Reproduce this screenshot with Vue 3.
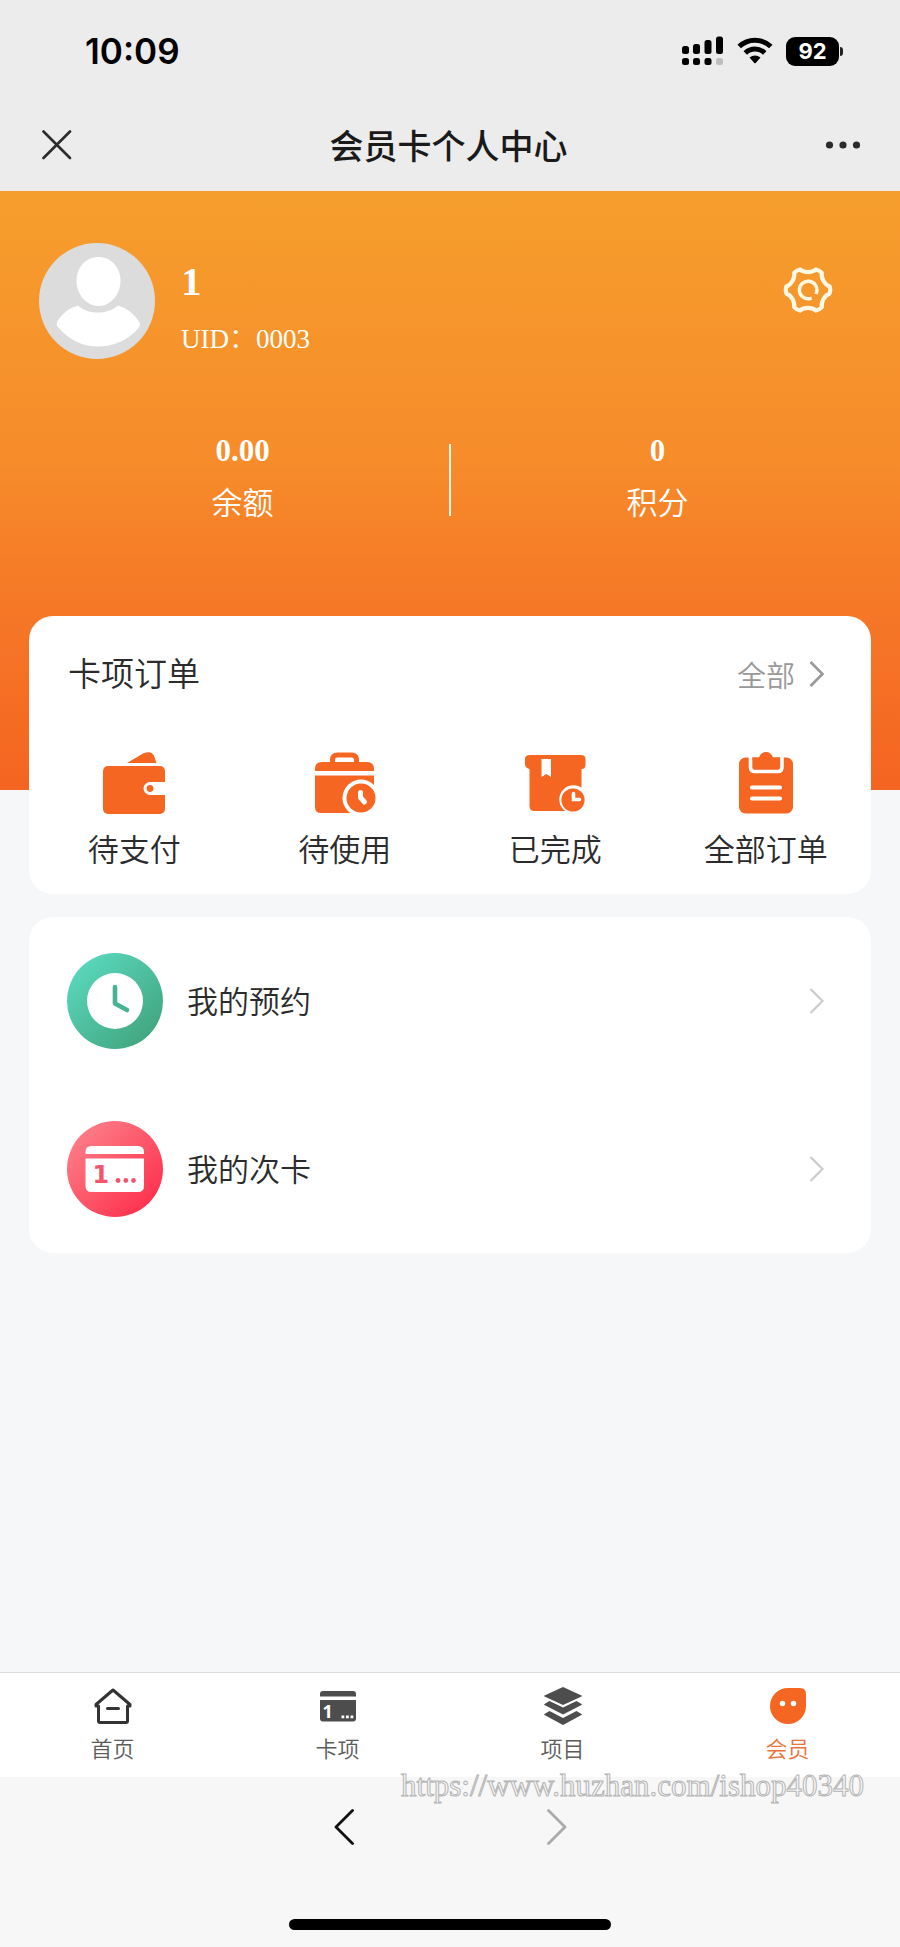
<script setup>
const stats = [
  { value: '0.00', label: '余额' },
  { value: '0', label: '积分' },
]

const orders = [
  { icon: 'wallet', label: '待支付' },
  { icon: 'case', label: '待使用' },
  { icon: 'box', label: '已完成' },
  { icon: 'board', label: '全部订单' },
]

const entries = [
  { icon: 'clock', label: '我的预约' },
  { icon: 'card', label: '我的次卡' },
]

const tabs = [
  { icon: 'home', label: '首页' },
  { icon: 'card', label: '卡项' },
  { icon: 'layers', label: '项目' },
  { icon: 'face', label: '会员', active: true },
]

// Six-toothed gear outline around the origin
const point = (deg, r) => {
  const a = (deg * Math.PI) / 180
  return `${(r * Math.cos(a)).toFixed(2)} ${(r * Math.sin(a)).toFixed(2)}`
}
const gear =
  [0, 60, 120, 180, 240, 300]
    .map(
      (a, i) =>
        `${i ? 'L' : 'M'}${point(a - 9, 22)} Q${point(a, 22.8)} ${point(a + 9, 22)} ` +
        `C${point(a + 17, 17.5)} ${point(a + 43, 17.5)} ${point(a + 51, 22)}`
    )
    .join(' ') + ' Z'
</script>

<template>
  <div class="page">
    <header class="top">
      <div class="status">
        <span class="time">10:09</span>
        <div class="signals">
          <svg width="42" height="30" viewBox="0 0 42 30" aria-hidden="true">
            <rect x="0" y="10" width="7" height="8" rx="2.5" />
            <rect x="11" y="8" width="7" height="10" rx="2.5" />
            <rect x="22.5" y="4" width="7" height="14" rx="2.5" />
            <rect x="34" y="0.5" width="7" height="17.5" rx="2.5" />
            <rect x="0" y="22" width="7" height="7" rx="2.5" />
            <rect x="11" y="22" width="7" height="7" rx="2.5" />
            <rect x="22.5" y="22" width="7" height="7" rx="2.5" />
            <rect x="34" y="22" width="7" height="7" rx="2.5" fill="#bdbdbd" />
          </svg>
          <svg width="36" height="28" viewBox="0 0 36 28" aria-hidden="true">
            <path d="M2.2 9.5 A23 23 0 0 1 33.8 9.5" fill="none" stroke="#000" stroke-width="5" />
            <path d="M8.3 16 A14 14 0 0 1 27.7 16" fill="none" stroke="#000" stroke-width="5" />
            <path d="M12.5 20.5 Q18 16.5 23.5 20.5 L18.7 26 Q18 26.7 17.3 26 Z" />
          </svg>
          <div class="battery"><span>92</span></div>
        </div>
      </div>
      <nav class="navbar">
        <button class="plain" aria-label="关闭">
          <svg width="30" height="30" viewBox="0 0 30 30"><path d="M1.5 1.5 L28 28 M28 1.5 L1.5 28" stroke="#2b2b2b" stroke-width="2.6" fill="none" stroke-linecap="round" /></svg>
        </button>
        <h1>会员卡个人中心</h1>
        <button class="plain" aria-label="更多">
          <svg width="36" height="10" viewBox="0 0 36 10" fill="#2b2b2b"><circle cx="4.5" cy="5" r="3.6" /><circle cx="18" cy="5" r="3.6" /><circle cx="31.5" cy="5" r="3.6" /></svg>
        </button>
      </nav>
    </header>

    <section class="hero">
      <div class="profile">
        <svg class="avatar" viewBox="0 0 116 116" aria-label="头像">
          <circle cx="58" cy="58" r="58" fill="#dcdcdc" />
          <path d="M59.5 14 C72 14 81.5 24 81.5 38 C81.5 52 71 63 59.5 63 C48 63 37.5 52 37.5 38 C37.5 24 47 14 59.5 14 Z" fill="#fff" />
          <path d="M39 62.5 C46 68.5 52 69.5 59 69.5 C66 69.5 72 68 79 62.5 Q92 66 101 80 Q101.5 83 99 86 Q82 103.5 59 103.5 Q35 103.5 18 83 Q17 81 18.5 78 Q26 66 39 62.5 Z" fill="#fff" />
        </svg>
        <div class="who">
          <strong>1</strong>
          <span>UID：0003</span>
        </div>
        <button class="plain gear" aria-label="设置">
          <svg width="50" height="50" viewBox="-25 -25 50 50" fill="none" stroke="#fff8e4" stroke-width="4.2" stroke-linejoin="round">
            <path :d="gear" />
            <path d="M8.6 2.5 A8.8 8.8 0 1 0 2 8.6" stroke-width="3.4" stroke-linecap="square" />
          </svg>
        </button>
      </div>
      <div class="stats">
        <div v-for="s in stats" :key="s.label" class="stat">
          <strong>{{ s.value }}</strong>
          <span>{{ s.label }}</span>
        </div>
      </div>
    </section>

    <main>
      <section class="card orders">
        <div class="orders-head">
          <h2>卡项订单</h2>
          <a href="#all">
            全部
            <svg width="16" height="28" viewBox="0 0 16 28"><path d="M1.5 2 L13.5 14 L1.5 26" fill="none" stroke="#999" stroke-width="2.6" /></svg>
          </a>
        </div>
        <div class="order-list">
          <a v-for="o in orders" :key="o.label" href="#order">
            <svg v-if="o.icon === 'wallet'" width="64" height="64" viewBox="0 0 64 64" fill="#f56623">
              <path d="M25 12 L41.5 2.3 Q50 -1 52.5 6 L54.5 12 Z" />
              <rect x="1" y="15" width="62" height="48" rx="5" />
              <path d="M64 31 H48 A6.5 6.5 0 0 0 48 44 H64 Z" fill="#fff" />
              <circle cx="48" cy="37.5" r="3.4" />
            </svg>
            <svg v-else-if="o.icon === 'case'" width="64" height="64" viewBox="0 0 64 64" fill="#f56623">
              <path d="M19.5 13 V9 Q19.5 4 24.5 4 H38.5 Q43.5 4 43.5 9 V13" fill="none" stroke="#f56623" stroke-width="5" />
              <path d="M2 20 V18 Q2 11 9 11 H54 Q61 11 61 18 V20 Z" />
              <path d="M2 24.5 H61 V56 Q61 62 55 62 H8 Q2 62 2 56 Z" />
              <circle cx="48" cy="47" r="18.5" fill="#fff" />
              <path d="M48 62.5 H64 V66 H48 Z M61.5 33 H66 V64 H61.5 Z" fill="#fff" />
              <circle cx="48" cy="47" r="14.5" />
              <path d="M47.5 41.5 V46.5 L51.5 51" fill="none" stroke="#fff" stroke-width="5" stroke-linecap="round" stroke-linejoin="round" />
            </svg>
            <svg v-else-if="o.icon === 'box'" width="64" height="64" viewBox="-1 0 64 64" fill="#f56623">
              <path d="M6 4 H57 Q61.5 4 61.5 8 V14 Q61.5 18 57.5 18 V55 Q57.5 60 53 60 H10 Q5.5 60 5.5 55 V18 Q1 17 1 13 V8 Q1 4 6 4 Z" />
              <path d="M17.5 8 H27 V26 L22.2 23 L17.5 26 Z" fill="#fff" />
              <circle cx="49.5" cy="48.5" r="14.2" fill="#fff" />
              <circle cx="49" cy="49" r="11.6" />
              <path d="M49.5 42.5 V48.5 H55.5" fill="none" stroke="#fff" stroke-width="3.6" stroke-linecap="round" />
            </svg>
            <svg v-else width="64" height="64" viewBox="0 0 64 64" fill="#f56623">
              <rect x="5" y="6.5" width="54" height="56" rx="6.5" />
              <path d="M16.5 5 V16 Q16.5 20.5 21 20.5 H43.5 Q48 20.5 48 16 V5" fill="#f56623" stroke="#fff" stroke-width="3.6" />
              <path d="M14 4 H50 V6.5 H14 Z" fill="#fff" />
              <path d="M18.5 6.5 H25 Q27 1 32 1 Q37 1 39 6.5 H46 V9 H18.5 Z" />
              <path d="M18 36.5 H46 M18 47.5 H46" stroke="#fff" stroke-width="4.2" stroke-linecap="round" />
            </svg>
            <span>{{ o.label }}</span>
          </a>
        </div>
      </section>

      <section class="card entries">
        <a v-for="e in entries" :key="e.label" href="#entry">
          <svg v-if="e.icon === 'clock'" width="96" height="96" viewBox="0 0 96 96">
            <defs><linearGradient id="green" x1="0.1" y1="0.1" x2="0.85" y2="0.9"><stop offset="0" stop-color="#5ad8bd" /><stop offset="1" stop-color="#42a680" /></linearGradient></defs>
            <circle cx="48" cy="48" r="48" fill="url(#green)" />
            <circle cx="48" cy="48" r="28" fill="#fff" />
            <path d="M48 34 V50.5 L60 57" fill="none" stroke="#48b393" stroke-width="4.6" stroke-linecap="round" stroke-linejoin="round" />
          </svg>
          <svg v-else width="96" height="96" viewBox="0 0 96 96">
            <defs><linearGradient id="red" x1="0.1" y1="0.1" x2="0.85" y2="0.85"><stop offset="0" stop-color="#fc7f88" /><stop offset="1" stop-color="#fe344f" /></linearGradient></defs>
            <circle cx="48" cy="48" r="48" fill="url(#red)" />
            <path d="M18.5 33 V31 Q18.5 25 24.5 25 H71 Q77 25 77 31 V33 Z M18.5 37.5 H77 V65 Q77 71 71 71 H24.5 Q18.5 71 18.5 65 Z" fill="#fff" />
            <text x="25.5" y="62" font-size="24" class="one" fill="#f2566c">1</text>
            <g fill="#f2566c"><circle cx="51" cy="59.5" r="2.4" /><circle cx="58.8" cy="59.5" r="2.4" /><circle cx="66.5" cy="59.5" r="2.4" /></g>
          </svg>
          <span>{{ e.label }}</span>
          <svg width="16" height="28" viewBox="0 0 16 28"><path d="M1.5 2 L13.5 14 L1.5 26" fill="none" stroke="#ccc" stroke-width="2.2" /></svg>
        </a>
      </section>
    </main>

    <nav class="tabs">
      <a v-for="t in tabs" :key="t.label" href="#tab" :class="{ active: t.active }">
        <svg v-if="t.icon === 'home'" width="40" height="40" viewBox="0 0 40 40" fill="none" stroke="#333" stroke-width="3" stroke-linejoin="round" stroke-linecap="round">
          <path d="M20 4 L37 18.5 V20 H34.5 V35 Q34.5 36.5 33 36.5 H7 Q5.5 36.5 5.5 35 V20 H3 V18.5 Z" />
          <path d="M14.5 22.5 H25.5" />
        </svg>
        <svg v-else-if="t.icon === 'card'" width="40" height="40" viewBox="0 0 40 40">
          <path d="M2 10.5 V8 Q2 5 5 5 H35 Q38 5 38 8 V10.5 Z M2 14 H38 V32.5 Q38 35.5 35 35.5 H5 Q2 35.5 2 32.5 Z" fill="#4d4d4d" />
          <text x="4.5" y="32" font-size="18" class="digit" fill="#fff">1</text>
          <path d="M23.5 29.5 h2.8 v2.8 h-2.8 Z M28 29.5 h2.8 v2.8 h-2.8 Z M32.5 29.5 h2.8 v2.8 h-2.8 Z" fill="#fff" />
        </svg>
        <svg v-else-if="t.icon === 'layers'" width="40" height="40" viewBox="0 0 40 40" fill="#4d4d4d">
          <path d="M20 1 L38.5 9.5 Q39.5 10 38.5 10.5 L20 19 L1.5 10.5 Q0.5 10 1.5 9.5 Z" />
          <path d="M6.5 15 L20 21.5 L33.5 15 L38.5 18 Q39.5 18.5 38.5 19 L20 28.5 L1.5 19 Q0.5 18.5 1.5 18 Z" />
          <path d="M6.5 25 L20 32 L33.5 25 L38.5 28 Q39.5 28.5 38.5 29 L20 39 L1.5 29 Q0.5 28.5 1.5 28 Z" />
        </svg>
        <svg v-else width="40" height="40" viewBox="0 0 40 40">
          <path d="M20 2 H32 Q38 2 38 8 V20 A18 18 0 0 1 2 20 A18 18 0 0 1 20 2 Z" fill="#f56623" />
          <circle cx="14.5" cy="17.5" r="2.7" fill="#fff" />
          <circle cx="25.5" cy="17.5" r="2.7" fill="#fff" />
        </svg>
        <span>{{ t.label }}</span>
      </a>
    </nav>

    <footer class="browser">
      <span class="watermark">https://www.huzhan.com/ishop40340</span>
      <div class="history">
        <button class="plain" aria-label="后退">
          <svg width="20" height="36" viewBox="0 0 20 36"><path d="M18.5 1.5 L2 18 L18.5 34.5" fill="none" stroke="#111" stroke-width="2.8" stroke-linecap="round" stroke-linejoin="round" /></svg>
        </button>
        <button class="plain" aria-label="前进">
          <svg width="20" height="36" viewBox="0 0 20 36"><path d="M1.5 1.5 L18 18 L1.5 34.5" fill="none" stroke="#aaa" stroke-width="2.8" stroke-linecap="round" stroke-linejoin="round" /></svg>
        </button>
      </div>
      <div class="home-bar"></div>
    </footer>
  </div>
</template>

<style>
body {
  margin: 0;
}
</style>

<style scoped>
.page {
  display: flex;
  flex-direction: column;
  min-height: 100vh;
  background: #f5f7f9;
  color: #2b2b2b;
  font-family: 'Noto Sans CJK SC', sans-serif;
  font-weight: 350;
}
a {
  color: inherit;
  text-decoration: none;
}
svg {
  display: block;
  flex: none;
}
.plain {
  display: block;
  padding: 0;
  border: 0;
  background: none;
}
.digit {
  font-family: 'Noto Sans', sans-serif;
  font-weight: 700;
}
.one {
  font-family: 'DejaVu Sans', sans-serif;
  font-weight: 700;
}

.top {
  background: #ececec;
}
.status {
  display: flex;
  justify-content: space-between;
  align-items: center;
  height: 100px;
  padding: 2px 61px 0 85px;
  box-sizing: border-box;
}
.time {
  font: 600 35px/40px Inter, sans-serif;
  color: #000;
}
.signals {
  display: flex;
  align-items: center;
  gap: 13px;
}
.battery {
  position: relative;
  width: 53px;
  border-radius: 9px;
  background: #000;
  color: #fff;
  font: 700 22px/29px Inter, sans-serif;
  text-align: center;
}
.battery::after {
  content: '';
  position: absolute;
  left: 54px;
  top: 10px;
  width: 3px;
  height: 9px;
  border-radius: 0 4px 4px 0;
  background: #222;
}
.navbar {
  display: flex;
  justify-content: space-between;
  align-items: center;
  height: 91px;
  padding: 0 39px 2px 42px;
  box-sizing: border-box;
}
h1 {
  margin: 0;
  font-size: 34px;
  line-height: 48px;
  font-weight: 500;
  color: #1a1a1a;
}

.hero {
  padding: 52px 35px 267px;
  background: linear-gradient(#f69e2d, #f68c2a 45%, #f67d28 62%, #f46422);
  color: #fff;
}
.profile {
  display: flex;
  gap: 26px;
  padding: 0 5px 0 4px;
}
.avatar {
  width: 116px;
  height: 116px;
}
.who {
  display: flex;
  flex: 1;
  flex-direction: column;
  gap: 14px;
  padding-top: 16px;
  font-family: 'Liberation Serif', 'Noto Sans CJK SC', serif;
}
.who strong {
  font-size: 41px;
  line-height: 44px;
  font-weight: 700;
}
.who span {
  font-size: 27px;
  line-height: 44px;
}
.gear {
  align-self: flex-start;
  padding: 22px 27px 0 0;
}
.stats {
  display: flex;
  margin-top: 70px;
}
.stat {
  position: relative;
  display: flex;
  flex: 1;
  flex-direction: column;
  align-items: center;
  gap: 8px;
}
.stat + .stat::before {
  content: '';
  position: absolute;
  left: -1px;
  top: 13px;
  width: 2px;
  height: 72px;
  background: #fff8ea;
}
.stat strong {
  font: 700 31px/40px 'Liberation Serif', serif;
}
.stat span {
  font-size: 31px;
  line-height: 44px;
}

main {
  display: flex;
  flex: 1;
  flex-direction: column;
  gap: 23px;
  margin-top: -174px;
  padding: 0 29px 40px;
}
.card {
  border-radius: 24px;
  background: #fff;
}
.orders {
  padding-bottom: 23px;
}
.orders-head {
  display: flex;
  justify-content: space-between;
  align-items: center;
  padding: 30px 46px 0 39px;
}
h2 {
  margin: 0;
  font-size: 33px;
  line-height: 48px;
  font-weight: inherit;
}
.orders-head a {
  display: flex;
  align-items: center;
  gap: 14px;
  padding-top: 4px;
  font-size: 29px;
  line-height: 48px;
  color: #999;
}
.order-list {
  display: flex;
  margin-top: 53px;
}
.order-list a {
  display: flex;
  flex: 1;
  flex-direction: column;
  align-items: center;
  gap: 10px;
  font-size: 31px;
  line-height: 46px;
}
.entries a {
  display: flex;
  align-items: center;
  gap: 24px;
  height: 168px;
  padding: 0 46px 0 38px;
  font-size: 31px;
}
.entries span {
  flex: 1;
  padding-bottom: 4px;
}

.tabs {
  display: flex;
  border-top: 1px solid #dcdcdc;
  background: #fff;
}
.tabs a {
  display: flex;
  flex: 1;
  flex-direction: column;
  align-items: center;
  gap: 5px;
  padding: 13px 0 14px;
  font-size: 22px;
  line-height: 32px;
  color: #5c5c5c;
}
.tabs a.active {
  color: #e8743b;
}

.browser {
  position: relative;
  display: flex;
  flex-direction: column;
  align-items: center;
  padding: 32px 0 17px;
  background: #f7f7f7;
}
.watermark {
  position: absolute;
  right: 36px;
  top: -9px;
  font: 31px/36px 'Liberation Serif', serif;
  color: transparent;
  -webkit-text-stroke: 1px #b4b4b4;
}
.history {
  display: flex;
  gap: 193px;
}
.home-bar {
  width: 322px;
  height: 11px;
  margin-top: 74px;
  border-radius: 6px;
  background: #000;
}
</style>
